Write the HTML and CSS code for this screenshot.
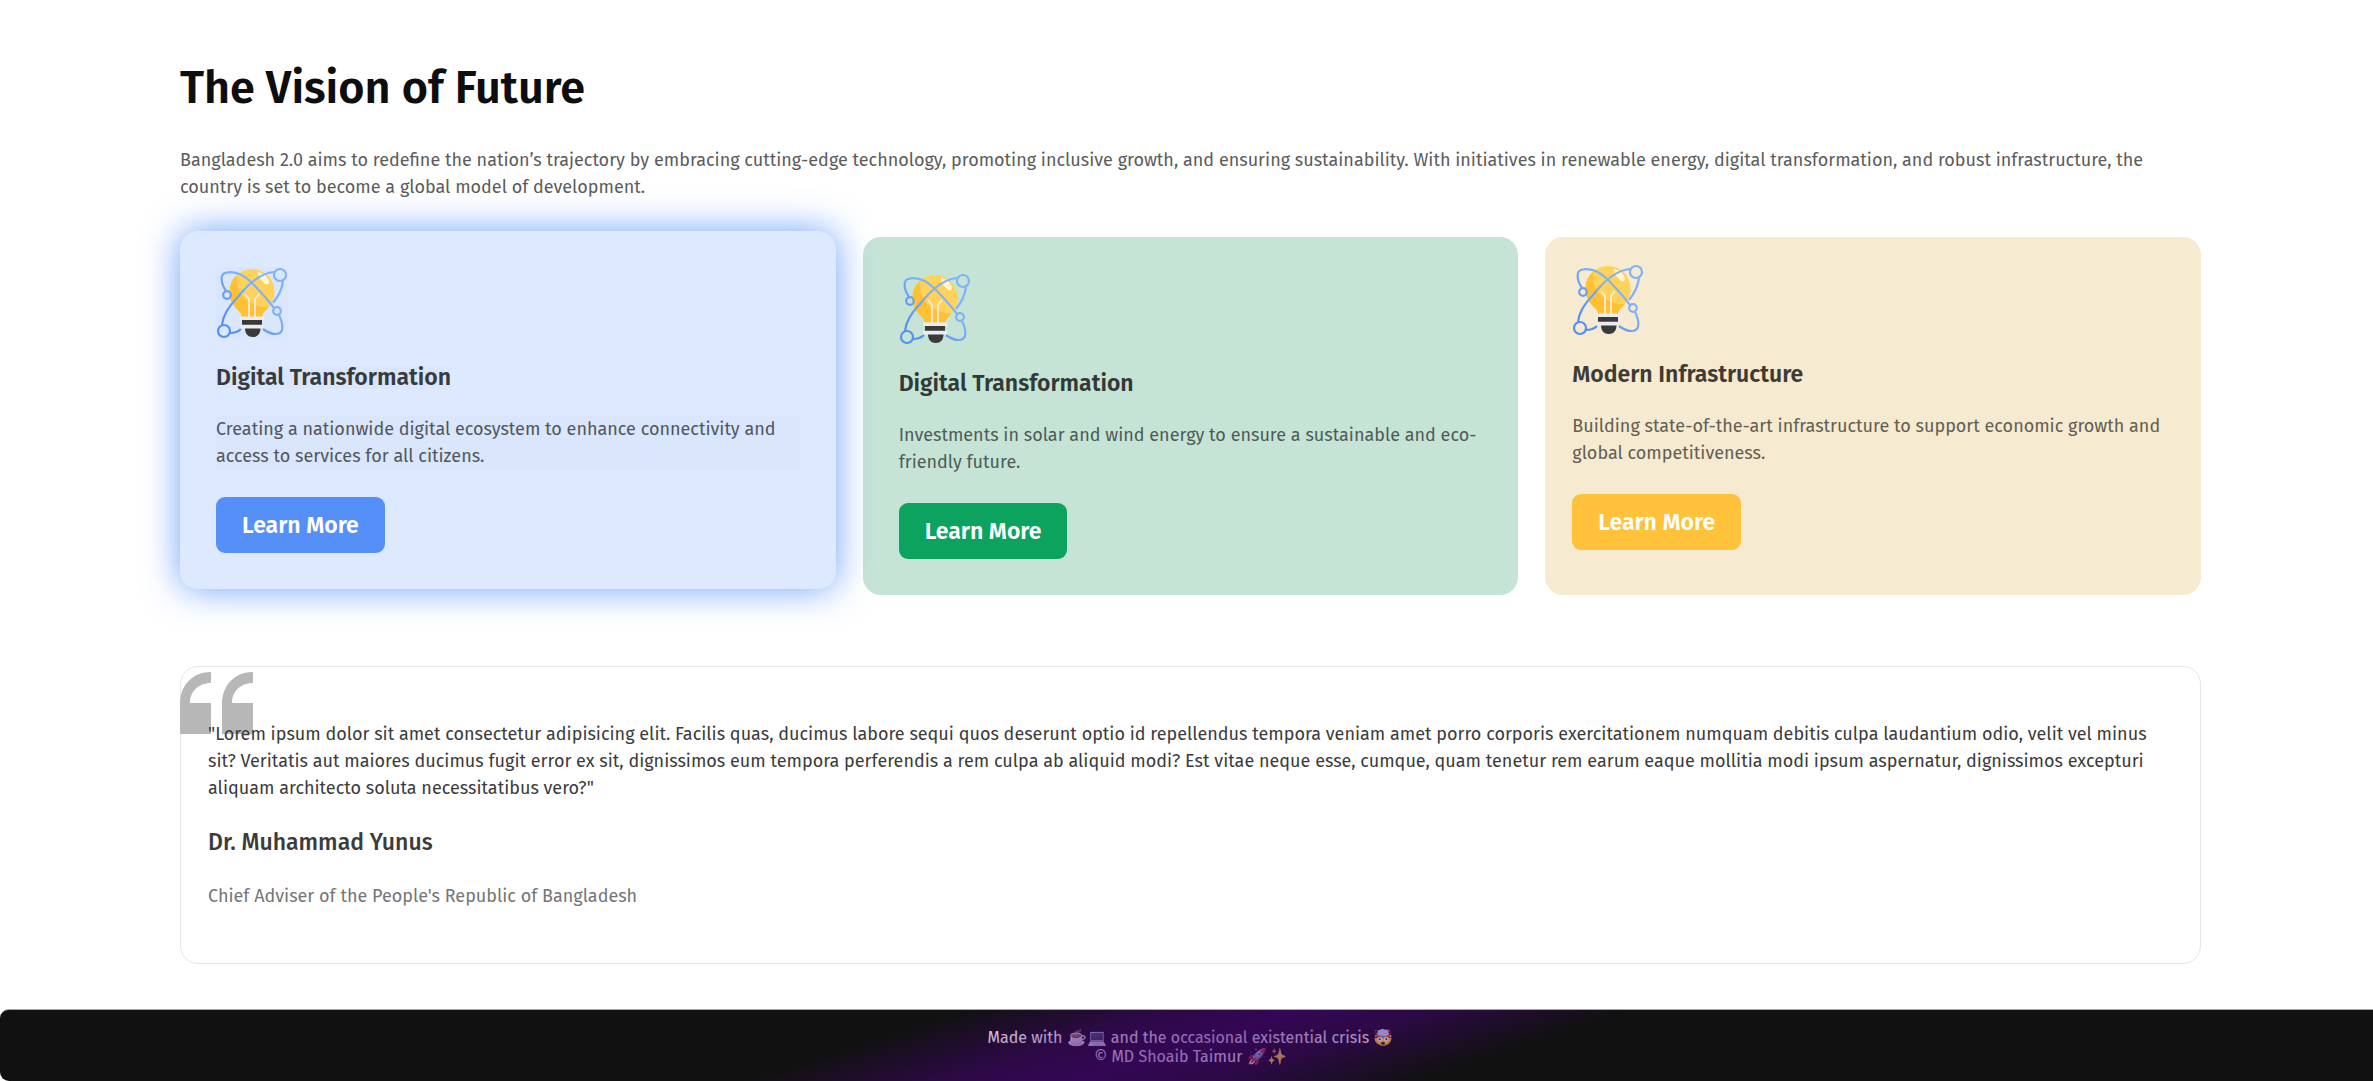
FILE: index.html
```html
<!DOCTYPE html>
<html lang="en">
<head>
<meta charset="utf-8">
<meta name="viewport" content="width=device-width, initial-scale=1">
<title>The Vision of Future</title>
<link rel="stylesheet" href="styles.css">
</head>
<body>
<svg class="defs" aria-hidden="true">
  <defs>
    <linearGradient id="orbit" x1="0" y1="72" x2="72" y2="0" gradientUnits="userSpaceOnUse">
      <stop offset="0.2" stop-color="#5490f5"/>
      <stop offset="0.6" stop-color="#80b2f8"/>
    </linearGradient>
    <symbol id="bulb" viewBox="0 0 72 72">
      <path d="M36 2a22.600 22.600 0 0 0-22.600 22.600c0 10 5 15 9 19 3 3 4 5 4 9h19.200c0-4 1-6 4-9 4-4 9-9 9-19A22.600 22.600 0 0 0 36 2z" fill="#ffd359"/>
      <path d="M21 8a22.600 22.600 0 0 0-7.600 16.600c0 10 5 15 9 19 3 3 4 5 4 9h19.200c0-4 1-6 4-9l3-3C34 40 19 28 21 8z" fill="#ffc033"/>
      <path d="M42 5c6 1 10 5 11 10 0 3-3 3-5 1-3-3-6-6-6-11z" fill="#fff6d8"/>
      <path d="M29 27l4 5v19M43 27l-4 5v19" fill="none" stroke="#f3ecdc" stroke-width="1.800"/>
      <path d="M29 61h15.500c0 6-3 9-7.700 9S29 67 29 61z" fill="#3a3a3a"/>
      <path d="M26 53h20v6H26z" fill="#3a3a3a"/>
      <path d="M24 49.500h24.700v3.600H24zM24 57.800h24.700v3.600H24z" fill="#ececf0"/>
      <g fill="none" stroke="url(#orbit)" stroke-width="2.200">
        <path d="M6 58C7 48 14 38 21 31 32 17 44 6 58 5M67 14C66 22 62 30 57 36M14 66c4 0 8-1 11-4M10 24C5 17 3 6 11 5.500 20 4 29 9 36 16c8 8 16 17 22 25M63 48c4 8 6 19-3 19-5 0-9-2-13-5"/>
        <circle cx="8" cy="64" r="6"/>
        <circle cx="64" cy="8" r="6"/>
        <circle cx="11" cy="28" r="3.800"/>
        <circle cx="61" cy="44" r="3.800"/>
      </g>
    </symbol>
  </defs>
</svg>

<main class="page">
  <section class="vision">
    <h1 class="vision-title">The Vision of Future</h1>
    <p class="vision-text">Bangladesh 2.0 aims to redefine the nation’s trajectory by embracing cutting-edge technology, promoting inclusive growth, and ensuring sustainability. With initiatives in renewable energy, digital transformation, and robust infrastructure, the country is set to become a global model of development.</p>
    <div class="cards">
      <article class="card card-blue">
        <svg class="card-icon" aria-hidden="true"><use href="#bulb"/></svg>
        <h2 class="card-title">Digital Transformation</h2>
        <p class="card-text">Creating a nationwide digital ecosystem to enhance connectivity and access to services for all citizens.</p>
        <button class="card-button" type="button">Learn More</button>
      </article>
      <article class="card card-green">
        <svg class="card-icon" aria-hidden="true"><use href="#bulb"/></svg>
        <h2 class="card-title">Digital Transformation</h2>
        <p class="card-text">Investments in solar and wind energy to ensure a sustainable and eco-friendly future.</p>
        <button class="card-button" type="button">Learn More</button>
      </article>
      <article class="card card-yellow">
        <svg class="card-icon" aria-hidden="true"><use href="#bulb"/></svg>
        <h2 class="card-title">Modern Infrastructure</h2>
        <p class="card-text">Building state-of-the-art infrastructure to support economic growth and global competitiveness.</p>
        <button class="card-button" type="button">Learn More</button>
      </article>
    </div>
  </section>

  <section class="quote">
    <svg class="quote-mark" viewBox="0 0 73 62" aria-hidden="true">
      <path d="M31 0v11C18 11 10 20 10 31h21v31H0V32C0 13 13 0 31 0zM73 0v11C60 11 52 20 52 31h21v31H42V32C42 13 55 0 73 0z" fill="#b7b7b7"/>
    </svg>
    <p class="quote-text">"Lorem ipsum dolor sit amet consectetur adipisicing elit. Facilis quas, ducimus labore sequi quos deserunt optio id repellendus tempora veniam amet porro corporis exercitationem numquam debitis culpa laudantium odio, velit vel minus sit? Veritatis aut maiores ducimus fugit error ex sit, dignissimos eum tempora perferendis a rem culpa ab aliquid modi? Est vitae neque esse, cumque, quam tenetur rem earum eaque mollitia modi ipsum aspernatur, dignissimos excepturi aliquam architecto soluta necessitatibus vero?"</p>
    <h2 class="quote-name">Dr. Muhammad Yunus</h2>
    <p class="quote-role">Chief Adviser of the People's Republic of Bangladesh</p>
  </section>
</main>

<footer class="footer">
  <p>Made with ☕💻 and the occasional existential crisis 🤯</p>
  <p>© MD Shoaib Taimur 🚀✨</p>
</footer>
</body>
</html>
```
FILE: styles.css
```css
* {
  box-sizing: border-box;
  margin: 0;
}

body {
  font-family: "Fira Sans", "Noto Sans", sans-serif;
  font-size: 18px;
  line-height: 27px;
  color: #5c5c5c;
  background: #fff;
}

.defs {
  position: absolute;
  width: 0;
  height: 0;
}

.page {
  display: flex;
  flex-direction: column;
  gap: 71px;
  padding: 66px 172px 45px 180px;
}

.vision {
  display: flex;
  flex-direction: column;
  gap: 36px;
}

.vision-title {
  font-size: 45px;
  font-weight: 600;
  line-height: 45px;
  color: #0e0e0e;
}

.cards {
  display: grid;
  grid-template-columns: repeat(3, 1fr);
  gap: 27px;
}

.card {
  display: flex;
  flex-direction: column;
  align-items: flex-start;
  gap: 27px;
  padding: 36px;
  border-radius: 18px;
}

.card-icon {
  width: 72px;
  height: 72px;
}

.card-title {
  font-size: 23px;
  font-weight: 600;
  line-height: 23px;
  color: #383b3e;
}

.card-text {
  align-self: stretch;
  color: #50565f;
}

.card-button {
  padding: 14px 26px;
  border: 0;
  border-radius: 9px;
  font: inherit;
  font-size: 23px;
  font-weight: 600;
  line-height: 28px;
  color: #fff;
  cursor: pointer;
}

.card-blue {
  background: #dce9fe;
  box-shadow: 0 0 36px rgba(85, 144, 248, 0.85);
  transform: translateY(-6px);
}

.card-blue .card-icon,
.card-blue .card-title,
.card-blue .card-text {
  background: #dae6fb;
}

.card-blue .card-button {
  background: #5590f8;
}

.card-green {
  background: #c6e4d6;
}

.card-green .card-title {
  color: #323a36;
}

.card-green .card-text {
  color: #4f5b55;
}

.card-green .card-button {
  background: #0ba35d;
}

.card-yellow {
  padding: 27px;
  background: #f6ead0;
}

.card-yellow .card-title {
  color: #3e3b34;
}

.card-yellow .card-text {
  color: #625e53;
}

.card-yellow .card-button {
  background: #ffc23a;
}

.quote {
  position: relative;
  display: flex;
  flex-direction: column;
  gap: 27px;
  padding: 54px 27px 53px;
  border: 1px solid #e7e7e7;
  border-radius: 18px;
}

.quote-mark {
  position: absolute;
  top: 5px;
  left: -1px;
  width: 73px;
  height: 62px;
}

.quote-text {
  position: relative;
  color: #3b3b3b;
}

.quote-name {
  font-size: 23px;
  font-weight: 500;
  line-height: 27px;
  color: #3b3b3b;
}

.quote-role {
  color: #757575;
}

.footer {
  position: relative;
  padding: 18px 0 15px 8px;
  border-top: 1px solid #a9a5ad;
  border-radius: 9px 0 0 9px;
  overflow: hidden;
  font-size: 16px;
  line-height: 19px;
  text-align: center;
  color: #fff;
  background: #111;
}

.footer::after {
  content: "";
  position: absolute;
  inset: 0;
  background: linear-gradient(162deg, rgba(75, 0, 130, 0) 37%, rgba(75, 0, 130, 0.48) 45%, rgba(75, 0, 130, 0.6) 50%, rgba(75, 0, 130, 0.48) 55%, rgba(75, 0, 130, 0) 63%);
}
```
